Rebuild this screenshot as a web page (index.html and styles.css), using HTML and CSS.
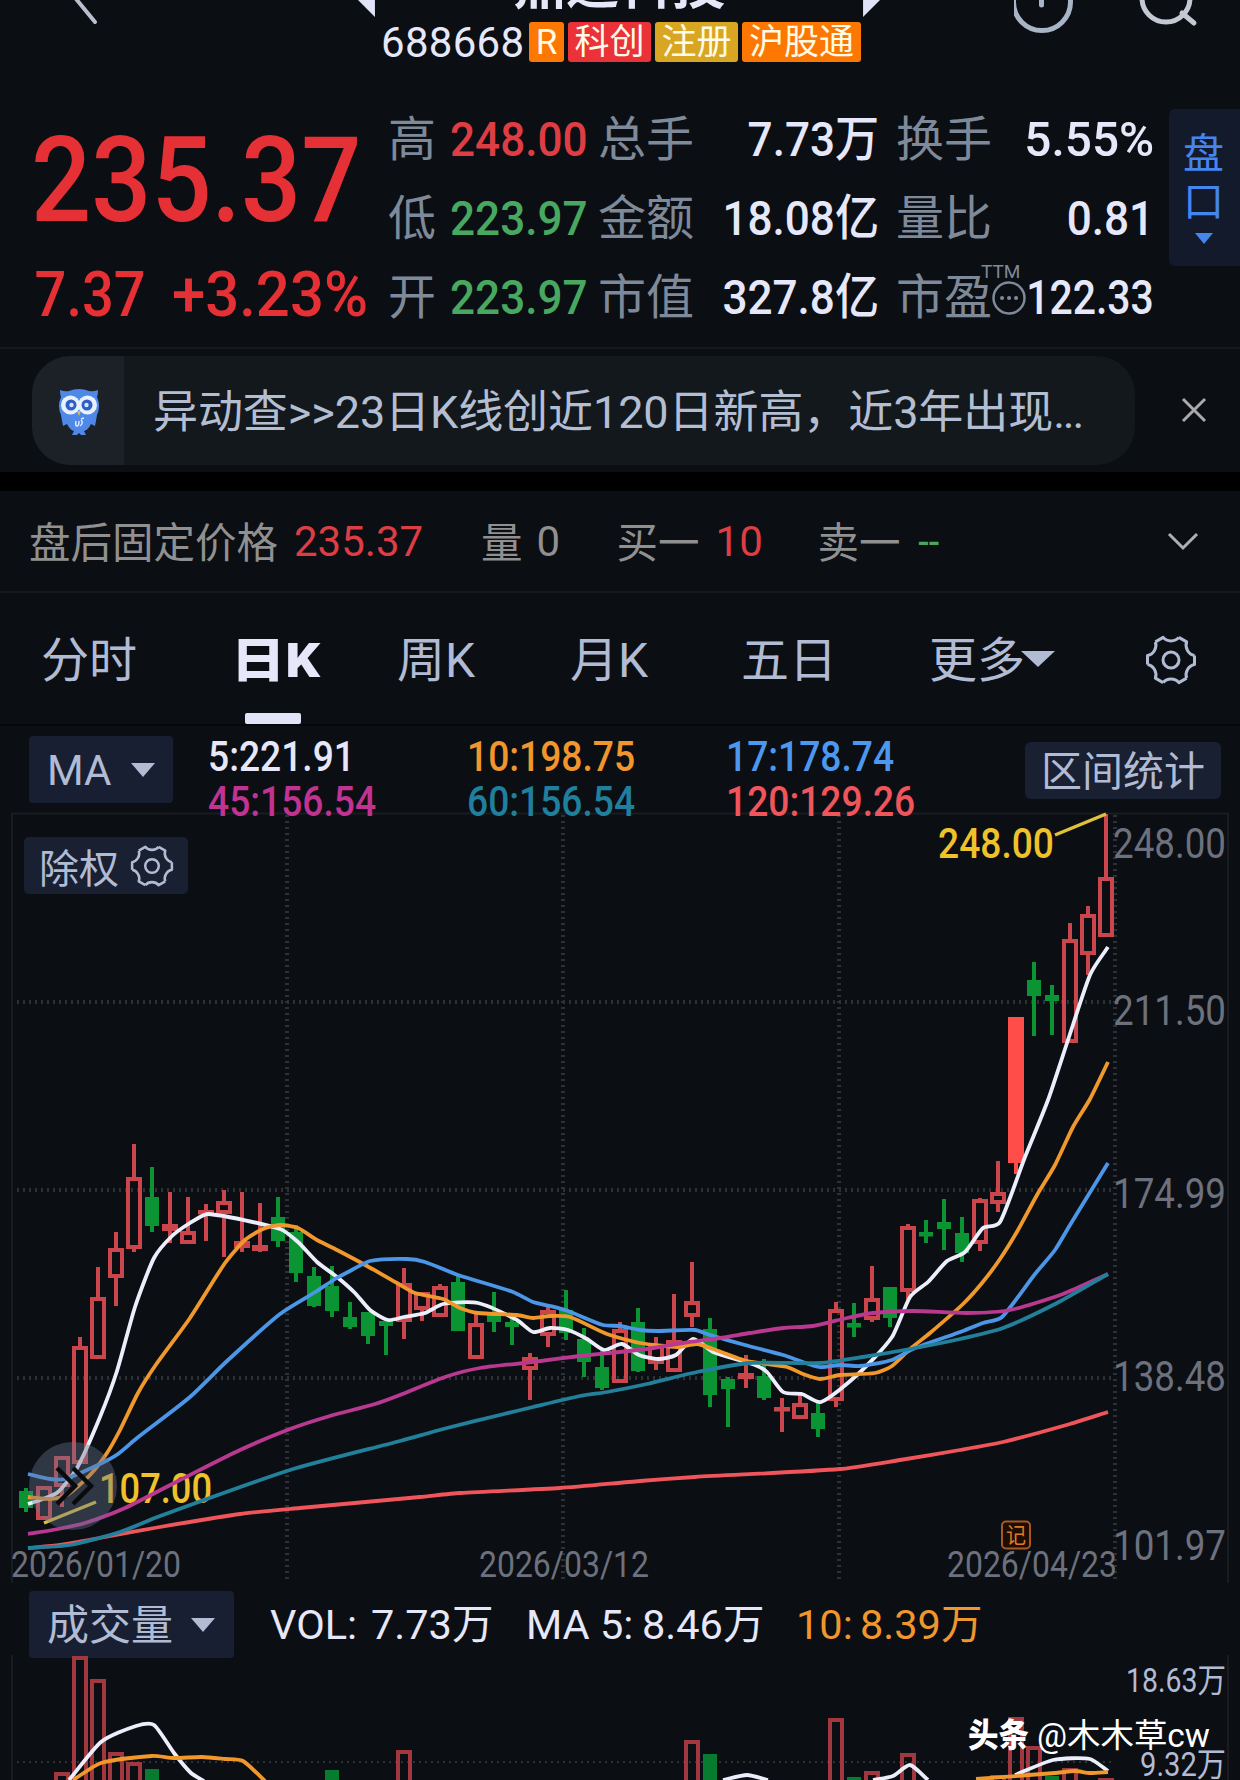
FILE: index.html
```html
<!DOCTYPE html>
<html lang="zh-CN">
<head>
  <meta charset="UTF-8">
  <title>鼎通科技 688668</title>
  <meta name="viewport" content="width=device-width, initial-scale=1.0" />
  <link rel="stylesheet" href="styles.css">
</head>
<body>

  <!-- shared icons -->
  <svg class="defs" width="0" height="0">
    <defs>
      <path id="tooth" d="M23.5-4.500V4.500C17.500 5.500 13.500 12.400 15.650 18.100" />
      <symbol id="gear" viewBox="-26 -26 52 52">
        <use href="#tooth" />
        <use href="#tooth" transform="rotate(60)" />
        <use href="#tooth" transform="rotate(120)" />
        <use href="#tooth" transform="rotate(180)" />
        <use href="#tooth" transform="rotate(240)" />
        <use href="#tooth" transform="rotate(300)" />
        <circle r="8" />
      </symbol>
    </defs>
  </svg>

  <header class="topbar">
    <svg class="back" width="30" height="30" viewBox="0 0 30 30"><path d="M4-6L27 22" /></svg>
    <div class="stock">
      <div class="stock-name">
        <i class="prev"></i>
        <h1>鼎通科技</h1>
        <i class="next"></i>
      </div>
      <div class="tags">
        <span class="code">688668</span>
        <span class="tag orange">R</span>
        <span class="tag red">科创</span>
        <span class="tag gold">注册</span>
        <span class="tag orange wide">沪股通</span>
      </div>
    </div>
    <svg class="actions" width="190" height="40" viewBox="0 0 190 40">
      <circle cx="28" cy="2" r="28.5" />
      <path d="M27.500-8V5" />
      <circle class="lens" cx="152" cy="-2" r="24" />
      <path class="lens" d="M168 13L180 23" />
    </svg>
  </header>

  <section class="quote">
    <div class="price">
      <div class="last"><b>235.37</b></div>
      <div class="change"><b class="diff">7.37</b><b class="pct">+3.23%</b></div>
    </div>
    <div class="stats">
      <label>高</label><b class="up">248.00</b>
      <label>总手</label><b class="right">7.73万</b>
      <label>换手</label><b class="right turnover">5.55%</b>
      <label>低</label><b class="down">223.97</b>
      <label>金额</label><b class="right">18.08亿</b>
      <label>量比</label><b class="right">0.81</b>
      <label>开</label><b class="down">223.97</b>
      <label>市值</label><b class="right">327.8亿</b>
      <label class="pe">市盈<small>TTM</small>
        <svg width="34" height="34" viewBox="-17 -17 34 34"><circle r="15.500" /><path d="M-7 0h.1M0 0h.1M7 0h.1" /></svg>
      </label><b class="right pe-value">122.33</b>
    </div>
    <div class="depth"><span>盘</span><span>口</span><i></i></div>
  </section>

  <section class="notice">
    <div class="pill">
      <div class="owl">
        <svg width="44" height="48" viewBox="0 0 44 48">
          <path fill="#5088e8" d="M3 2Q8 4 12 3Q22-1 32 3Q36 4 41 2Q41 7 40 9Q44 18 40 27Q39 33 38 38L34 36Q31 42 27 43L29 47H24L22 45L20 47H15L17 43Q13 42 10 36L6 38Q5 33 4 27Q0 18 4 9Q3 7 3 2Z" />
          <circle cx="13.500" cy="17" r="9.500" fill="#e8f1ff" />
          <circle cx="30.500" cy="17" r="9.500" fill="#e8f1ff" />
          <circle cx="14" cy="17" r="5.500" fill="#2f5fc4" />
          <circle cx="30" cy="17" r="5.500" fill="#2f5fc4" />
          <circle cx="14.500" cy="17" r="2.200" fill="#d5e5ff" />
          <circle cx="29.500" cy="17" r="2.200" fill="#d5e5ff" />
          <path fill="#d9bd55" d="M20 23h4l-2 5z" />
          <path fill="none" stroke="#dce8ff" stroke-width="1.500" d="M19 33q-1 5 1 5t2-5M23 38q4-3 1-6M24 31l3-1" />
        </svg>
      </div>
      <p>异动查&gt;&gt;23日K线创近120日新高，近3年出现<span>...</span></p>
    </div>
    <svg class="close" width="26" height="26" viewBox="0 0 26 26"><path d="M2 2L24 24M24 2L2 24" /></svg>
  </section>

  <section class="after-hours">
    <span>盘后固定价格</span><em class="up">235.37</em>
    <span class="vol">量</span><em>0</em>
    <span class="buy">买一</span><em class="up">10</em>
    <span class="sell">卖一</span><em class="down">--</em>
    <svg class="chevron" width="34" height="20" viewBox="0 0 34 20"><path d="M3 3L17 17L31 3" /></svg>
  </section>

  <nav class="tabs">
    <a>分时</a>
    <a class="active"><b>日K</b></a>
    <a>周K</a>
    <a>月K</a>
    <a>五日</a>
    <a class="more">更多<i class="caret"></i></a>
    <svg class="gear" width="52" height="52"><use href="#gear" /></svg>
  </nav>

  <section class="ma-bar">
    <div class="select">MA<i class="caret"></i></div>
    <div class="ma-values">
      <span class="ma5">5:221.91</span><span class="ma10">10:198.75</span><span class="ma17">17:178.74</span>
      <span class="ma45">45:156.54</span><span class="ma60">60:156.54</span><span class="ma120">120:129.26</span>
    </div>
    <div class="range">区间统计</div>
  </section>

  <section class="kline">
    <svg width="1240" height="770" viewBox="0 813 1240 770">
      <path class="frame" d="M12 1583V813.500H1228V1583" />
      <path class="grid" d="M17 1002H1115M17 1190H1115M17 1378H1115M287 815V1583M563 815V1583M839 815V1583M1115 815V1583" />
      <g id="candles"></g>
      <g class="axis">
        <text x="1113" y="858" textLength="113">248.00</text>
        <text x="1113" y="1025" textLength="113">211.50</text>
        <text x="1113" y="1208" textLength="113">174.99</text>
        <text x="1113" y="1391" textLength="113">138.48</text>
        <text x="1113" y="1560" textLength="113">101.97</text>
      </g>
      <g class="dates">
        <text x="11" y="1577" textLength="170">2026/01/20</text>
        <text x="479" y="1577" textLength="170">2026/03/12</text>
        <text x="947" y="1577" textLength="170">2026/04/23</text>
      </g>
      <g class="mark">
        <text x="938" y="858" textLength="116">248.00</text>
        <text x="99" y="1503" textLength="113">107.00</text>
        <path d="M1055 835L1106 814M44 1523L96 1502" />
      </g>
      <g id="lines"></g>
      <g class="note">
        <rect x="1002" y="1521.500" width="28" height="27" rx="4" />
        <text x="1006" y="1543" textLength="20">记</text>
      </g>
      <g class="scroll">
        <circle cx="73" cy="1486" r="44" />
        <path d="M57 1468L75 1486L57 1504M73 1468L91 1486L73 1504" />
      </g>
    </svg>
    <div class="adjust">除权<svg class="gear" width="44" height="44"><use href="#gear" /></svg></div>
  </section>

  <section class="vol-bar">
    <div class="select">成交量<i class="caret"></i></div>
    <span class="v1">VOL:</span><span class="v2">7.73万</span>
    <span class="v3">MA 5:</span><span class="v4">8.46万</span>
    <span class="v5">10:</span><span class="v6">8.39万</span>
  </section>

  <section class="volume">
    <svg width="1240" height="122" viewBox="0 1658 1240 122">
      <path class="vframe" d="M12 1655V1780M1228 1655V1780" />
      <path class="vgrid" d="M17 1762H1115" />
      <g id="volumes"></g>
      <g class="vaxis">
        <text x="1126" y="1692" textLength="100">18.63万</text>
        <text x="1140" y="1776" textLength="86">9.32万</text>
      </g>
      <g class="author">
        <text class="brand" x="968" y="1747" textLength="61">头条</text>
        <text x="1037" y="1747" textLength="173">@木木草cw</text>
      </g>
    </svg>
  </section>

  <script src="chart.js"></script>
</body>
</html>
```

FILE: styles.css
```css
* {
  margin: 0;
  padding: 0;
  box-sizing: border-box;
}

body {
  width: 1240px;
  height: 1780px;
  overflow: hidden;
  font-family: Roboto, "Noto Sans CJK SC", sans-serif;
  background: #0b0e13;
  color: #e6e8fa;
}

svg {
  display: block;
  fill: none;
}

.defs {
  position: absolute;
}

i, em {
  font-style: normal;
}

b {
  font-weight: 500;
}

.up {
  color: #dd3d43;
}

.down {
  color: #48a860;
}

/* top bar */
.topbar {
  height: 99px;
  display: flex;
  overflow: hidden;
}

.back {
  margin-left: 68px;
  stroke: #b9bfcc;
  stroke-width: 4;
  stroke-linecap: round;
}

.stock {
  width: 530px;
  margin-left: 256px;
}

.stock-name {
  height: 54px;
  margin-top: -41px;
  display: flex;
  align-items: flex-end;
}

.stock-name h1 {
  width: 489px;
  font-size: 53px;
  line-height: 54px;
  font-weight: 700;
  text-align: center;
}

.prev, .next {
  width: 21px;
  height: 21px;
  margin-bottom: -4px;
  background: #e0e4f6;
  clip-path: polygon(0 0, 100% 0, 100% 100%);
}

.next {
  clip-path: polygon(0 0, 100% 0, 0 100%);
}

.tags {
  display: flex;
  gap: 4px;
  margin: 9px 0 0 27px;
  height: 40px;
  line-height: 40px;
}

.code {
  width: 144px;
  padding-top: 1px;
  font-size: 42px;
  letter-spacing: 0.3px;
}

.tag {
  width: 83px;
  padding-top: 1px;
  border-radius: 3px;
  font-size: 35px;
  text-align: center;
  color: #fffbe6;
}

.tag.orange { background: #fd7803; }
.tag.red { background: #ea3238; }
.tag.gold { background: #d8a622; }
.tag.wide { width: 119px; }

.code + .tag {
  width: 35px;
}

.actions {
  margin-left: 130px;
  stroke: #a9b4c7;
  stroke-width: 5;
  stroke-linecap: round;
}

.actions .lens {
  stroke: #c4c8d2;
}

/* quote */
.quote {
  height: 250px;
  display: flex;
  border-bottom: 2px solid #15191e;
}

.price {
  width: 388px;
  padding: 3px 0 0 31px;
  color: #e53035;
}

.price b {
  display: inline-block;
  transform-origin: left;
}

.last {
  height: 158px;
  font-size: 119px;
  line-height: 158px;
}

.last b {
  transform: scaleX(0.89);
}

.change {
  height: 70px;
  display: flex;
  font-size: 63px;
  line-height: 70px;
}

.diff {
  width: 141px;
  padding-left: 4px;
  transform: scaleX(0.89);
}

.pct {
  transform: scaleX(0.95);
}

.stats {
  width: 781px;
  padding-top: 1px;
  display: grid;
  grid-template-columns: 62px 148px 101px 180px 127px 148px;
  grid-template-rows: repeat(3, 79px);
  line-height: 80px;
}

.stats label {
  font-size: 48px;
  white-space: nowrap;
  color: #7e8999;
}

.stats label:nth-of-type(3n) {
  padding-left: 17px;
}

.stats b {
  font-size: 49px;
  transform: scaleX(0.9);
  transform-origin: left;
}

.stats .right {
  justify-self: end;
  transform-origin: right;
}

.stats .turnover {
  transform: scaleX(0.975);
}

.stats .pe-value {
  transform: scaleX(0.835);
}

.pe {
  position: relative;
}

.pe small {
  position: absolute;
  left: 102px;
  top: 4px;
  font-size: 19px;
  line-height: 20px;
}

.pe svg {
  position: absolute;
  left: 113px;
  top: 23px;
  stroke: #7e8999;
  stroke-width: 2.5;
}

.pe path {
  stroke-width: 4;
  stroke-linecap: round;
}

.depth {
  width: 71px;
  height: 157px;
  margin-top: 10px;
  padding-top: 21px;
  display: flex;
  flex-direction: column;
  align-items: center;
  border-radius: 6px 0 0 6px;
  background: #131a2b;
  font-size: 41px;
  line-height: 48px;
  color: #4585ee;
}

.depth span {
  padding-right: 2px;
}

.depth i {
  margin: 7px 2px 0 0;
  border: 9px solid transparent;
  border-top: 11px solid #4585ee;
  border-bottom: 0;
}

/* notice */
.notice {
  height: 142px;
  padding: 7px 0 0 32px;
  display: flex;
  border-bottom: 19px solid #000;
}

.pill {
  width: 1103px;
  height: 109px;
  display: flex;
  overflow: hidden;
  border-radius: 38px;
  background: #13181c;
}

.owl {
  width: 92px;
  padding: 32px 0 0 25px;
  background: #1c2027;
}

.pill p {
  padding-left: 29px;
  font-size: 45px;
  line-height: 114px;
  letter-spacing: -0.08px;
  white-space: nowrap;
  color: #b3bed3;
}

.pill p span {
  letter-spacing: -2.2px;
}

.close {
  margin: 41px 0 0 46px;
  stroke: #aaa;
  stroke-width: 3;
}

/* after hours */
.after-hours {
  height: 102px;
  padding-left: 29px;
  display: flex;
  align-items: center;
  border-bottom: 2px solid #15191e;
  font-size: 41.5px;
  color: #909090;
}

.after-hours span {
  margin-top: -2px;
}

.after-hours em {
  width: 132px;
  margin-left: 16px;
  font-size: 42px;
}

.after-hours .vol { margin-left: 55px; }
.vol + em { width: 24px; }
.after-hours .vol + em { width: 24px; margin-left: 14px; }
.after-hours .buy { margin-left: 56px; }
.after-hours .buy + em { width: 48px; }
.after-hours .sell { margin-left: 54px; }
.after-hours .sell + em { width: 24px; transform: scaleX(0.9); }

.chevron {
  margin: 0 0 0 225px;
  stroke: #b0b0b0;
  stroke-width: 3;
}

/* tabs */
.tabs {
  height: 133px;
  padding-left: 41px;
  display: flex;
  border-bottom: 2px solid #050709;
  font-size: 48px;
  line-height: 135px;
  color: #b1bbd3;
}

.tabs a {
  width: 173px;
  white-space: nowrap;
}

.tabs a:first-child { width: 195px; }
.tabs a.active { width: 161px; }
.tabs a:nth-child(4) { width: 171px; }
.tabs a:nth-child(5) { width: 188px; }

.tabs .active {
  position: relative;
  color: #e6e8fa;
}

.active b {
  display: inline-block;
  margin-left: -5px;
  font-weight: 900;
  transform: scaleX(1.13);
  transform-origin: left;
}

.active::after {
  content: "";
  position: absolute;
  left: 9px;
  bottom: 0;
  width: 56px;
  height: 11px;
  border-radius: 2px;
  background: #e1e4f8;
}

.caret {
  display: inline-block;
  border: 12px solid transparent;
  border-top: 14px solid #b1bbd3;
  border-bottom: 0;
}

.more .caret {
  border-width: 16px 17px 0;
  margin-bottom: 10px;
  margin-left: -4px;
}

.gear {
  stroke: #b1bbd3;
  stroke-width: 3;
  stroke-linejoin: round;
}

.tabs .gear {
  margin: 41px 0 0 43px;
}

/* MA row */
.ma-bar {
  position: relative;
  z-index: 1;
  height: 87px;
  padding: 10px 0 0 29px;
  display: flex;
}

.select {
  width: 144px;
  height: 67px;
  padding: 2px 18px 0;
  display: flex;
  align-items: center;
  justify-content: space-between;
  border-radius: 4px;
  background: #191f32;
  font-size: 42px;
  color: #b1bbd3;
}

.select .caret {
  margin-bottom: 2px;
}

.ma-values {
  width: 852px;
  padding-left: 35px;
  display: grid;
  grid-template-columns: 259px 259px 260px;
  grid-template-rows: 45px 45px;
  line-height: 41px;
  font-size: 43px;
  font-weight: 500;
}

.ma-values span {
  transform: scaleX(0.865);
  transform-origin: left;
}

.ma5 { color: #e6e8fa; }
.ma10 { color: #f0962c; }
.ma17 { color: #4c98ee; }
.ma45 { color: #c13391; }
.ma60 { color: #207f9d; }
.ma120 { color: #ef555b; }

.range {
  width: 196px;
  height: 57px;
  margin-top: 6px;
  border-radius: 6px;
  background: #182032;
  font-size: 41px;
  line-height: 60px;
  text-align: center;
  color: #b1bbd3;
}

/* daily chart */
.kline {
  position: relative;
  height: 770px;
}

.adjust {
  position: absolute;
  left: 24px;
  top: 24px;
  width: 164px;
  height: 57px;
  padding-left: 15px;
  display: flex;
  align-items: center;
  gap: 11px;
  border-radius: 5px;
  background: #182032;
  font-size: 40px;
  color: #b1bbd3;
}

.kline svg,
.volume svg {
  overflow: visible;
}

.frame, .vframe {
  stroke: #191c21;
  stroke-width: 2;
}

.grid, .vgrid {
  stroke: #2d3034;
  stroke-width: 4;
  stroke-dasharray: 2 4;
}

.vgrid {
  stroke-width: 2;
}

.axis, .dates {
  fill: #6c717d;
  font-size: 43px;
}

.dates {
  font-size: 36px;
}

.mark {
  fill: #efc22c;
  stroke: none;
  font-size: 43px;
  font-weight: 500;
}

.mark path {
  stroke: #dfc23c;
  stroke-width: 3.5;
}

.note {
  font-size: 22px;
  fill: #e07a24;
}

.note rect {
  fill: #1e0d05;
  stroke: #a45a22;
  stroke-width: 2;
}

.scroll circle {
  fill: #68768e;
  fill-opacity: 0.4;
}

.scroll path {
  stroke: #080a0e;
  stroke-width: 4.5;
}

.rise { stroke: #cb464c; stroke-width: 4; }
.fall { stroke: #0b9434; fill: #0b9434; stroke-width: 4; }
.limit { stroke: #ff4e4a; fill: #ff4e4a; stroke-width: 4; }

.line {
  stroke-width: 3.8;
  stroke-linejoin: round;
}

/* volume */
.vol-bar {
  height: 75px;
  padding: 8px 0 0 29px;
  display: flex;
  font-size: 41.5px;
  line-height: 67px;
  white-space: nowrap;
}

.vol-bar .select {
  width: 205px;
  padding-right: 19px;
}

.v1 { width: 101px; margin-left: 36px; }
.v2 { width: 155px; }
.v3 { width: 116px; }
.v4 { width: 154px; }
.v5 { width: 64px; }
.v5, .v6 { color: #f0962c; }

.volume {
  height: 122px;
}

.volume .rise { stroke: #a2383f; }
.volume .fall { fill: #077b30; stroke: none; }

.vaxis {
  fill: #b1bbd3;
  font-size: 33px;
}

.author {
  fill: #fff;
  font-size: 33px;
}

.brand {
  font-weight: 900;
}
```

FILE: chart.js
```js
// [type, high, body top, body bottom, low], one entry per trading day
const days = [
  ['g', 1488, 1491, 1508, 1512], ['r', 1486, 1486, 1520, 1520], ['r', 1456, 1456, 1487, 1507],
  ['r', 1337, 1346, 1464, 1464], ['r', 1267, 1297, 1359, 1359], ['r', 1232, 1248, 1278, 1306],
  ['r', 1144, 1177, 1249, 1252], ['g', 1167, 1197, 1226, 1232], ['r', 1192, 1224, 1231, 1243],
  ['r', 1197, 1231, 1244, 1244], ['r', 1204, 1210, 1214, 1241], ['r', 1190, 1201, 1214, 1257],
  ['r', 1192, 1241, 1248, 1252], ['r', 1203, 1245, 1251, 1252], ['g', 1197, 1217, 1241, 1247],
  ['g', 1225, 1232, 1273, 1282], ['g', 1267, 1276, 1306, 1307], ['g', 1266, 1286, 1311, 1317],
  ['g', 1302, 1317, 1327, 1329], ['g', 1312, 1312, 1336, 1344], ['g', 1320, 1321, 1326, 1355],
  ['r', 1268, 1283, 1322, 1339], ['r', 1292, 1292, 1310, 1321], ['r', 1284, 1286, 1317, 1317],
  ['g', 1275, 1282, 1331, 1331], ['r', 1312, 1323, 1359, 1359], ['g', 1292, 1312, 1322, 1332],
  ['g', 1317, 1322, 1327, 1345], ['r', 1353, 1357, 1370, 1400], ['r', 1307, 1310, 1336, 1347],
  ['g', 1290, 1310, 1333, 1340], ['g', 1328, 1339, 1362, 1377], ['g', 1350, 1367, 1388, 1390],
  ['r', 1322, 1329, 1383, 1383], ['g', 1308, 1322, 1371, 1372], ['r', 1337, 1345, 1364, 1370],
  ['r', 1294, 1340, 1372, 1372], ['r', 1262, 1301, 1317, 1327], ['g', 1318, 1329, 1395, 1407],
  ['g', 1377, 1379, 1389, 1427], ['r', 1355, 1373, 1379, 1388], ['g', 1359, 1376, 1398, 1400],
  ['r', 1398, 1407, 1411, 1432], ['r', 1393, 1403, 1419, 1419], ['g', 1403, 1413, 1429, 1437],
  ['r', 1302, 1309, 1401, 1407], ['g', 1303, 1323, 1327, 1337], ['r', 1266, 1298, 1320, 1322],
  ['g', 1287, 1287, 1318, 1327], ['r', 1224, 1226, 1292, 1300], ['g', 1220, 1232, 1236, 1243],
  ['g', 1199, 1222, 1229, 1250], ['g', 1217, 1233, 1253, 1262], ['r', 1198, 1199, 1244, 1251],
  ['r', 1161, 1192, 1204, 1212], ['f', 1017, 1017, 1163, 1174], ['g', 962, 980, 996, 1036],
  ['g', 985, 995, 1001, 1035], ['r', 923, 939, 1043, 1043], ['r', 906, 914, 955, 975],
  ['r', 814, 877, 937, 937]
];

// moving averages
const lines = {
  '#ef555b': '28,1548 60,1545 105,1537 160,1527 240,1514 300,1508 420,1497 460,1493 560,1488 640,1481 695,1477 840,1469 900,1460 960,1450 1003,1442 1070,1424 1108,1412',
  '#edeefb': '28,1504 43,1499 58,1492 77,1468 100,1417 117,1371 135,1307 154,1258 172,1236 190,1223 208,1214 280,1229 298,1242 317,1262 337,1277 355,1293 370,1310 388,1320 404,1317 425,1313 443,1304 478,1303 517,1320 533,1332 550,1328 568,1330 587,1339 604,1350 622,1344 639,1355 658,1359 676,1355 693,1339 713,1352 755,1365 767,1372 783,1392 802,1394 821,1402 857,1375 892,1337 910,1297 928,1282 947,1261 965,1252 983,1228 1000,1222 1025,1157 1048,1100 1068,1040 1090,975 1108,947',
  '#f0982c': '28,1497 50,1499 67,1495 90,1475 107,1453 120,1430 138,1393 155,1366 190,1318 225,1263 245,1240 263,1229 280,1225 298,1228 317,1240 337,1250 367,1266 397,1283 415,1293 443,1299 460,1308 478,1313 517,1315 533,1318 550,1316 570,1317 607,1334 640,1343 677,1347 697,1344 713,1349 747,1361 787,1367 803,1374 820,1379 840,1375 875,1373 892,1366 910,1349 930,1333 963,1304 982,1283 1000,1259 1018,1230 1037,1195 1055,1165 1073,1127 1090,1099 1108,1062',
  '#4c96e8': '28,1474 50,1479 65,1479 100,1464 118,1454 137,1438 190,1397 227,1361 280,1314 317,1291 335,1279 350,1271 370,1261 407,1259 425,1262 458,1275 513,1292 533,1302 550,1306 568,1311 603,1325 620,1326 640,1330 657,1331 695,1330 710,1335 745,1345 783,1355 819,1367 840,1365 860,1366 892,1360 913,1349 963,1331 983,1323 1002,1317 1035,1274 1055,1250 1070,1225 1108,1163',
  '#b8398f': '28,1534 58,1529 85,1523 125,1508 180,1480 240,1450 290,1429 330,1416 375,1404 400,1395 445,1377 480,1368 533,1362 580,1356 647,1349 683,1343 720,1338 750,1333 783,1328 813,1326 847,1318 873,1313 913,1311 967,1313 1010,1310 1063,1294 1108,1274',
  '#23809a': '28,1548 70,1545 120,1532 160,1516 290,1470 400,1441 447,1428 500,1415 533,1407 580,1396 607,1392 647,1384 697,1372 750,1363 820,1363 863,1357 910,1349 960,1339 1003,1328 1057,1303 1108,1274'
};

// [day index, top, type]
const volumes = [
  [2, 1772, 'r'], [3, 1656, 'r'], [4, 1679, 'r'], [5, 1752, 'r'], [6, 1762, 'r'],
  [7, 1769, 'g'], [17, 1770, 'g'], [21, 1750, 'r'], [37, 1740, 'r'], [38, 1754, 'g'],
  [45, 1718, 'r'], [46, 1777, 'g'], [47, 1771, 'r'], [49, 1753, 'r'], [54, 1775, 'r'],
  [55, 1717, 'r'], [56, 1746, 'r'], [57, 1776, 'g'], [58, 1768, 'r'], [60, 1778, 'r']
];

const volumeLines = [
  ['#edeefb', '69,1780 101,1742 136,1726 154,1725 174,1753 191,1773 204,1781'],
  ['#edeefb', '723,1780 747,1775 768,1780'],
  ['#edeefb', '873,1780 893,1776 910,1765 928,1780'],
  ['#f0982c', '73,1780 101,1763 152,1756 174,1758 202,1757 225,1759 243,1761 265,1781'],
  ['#edeefb', '1015,1775 1053,1760 1090,1759 1108,1771'],
  ['#f0982c', '976,1779 1055,1773 1075,1771 1090,1773 1108,1772']
];

const dayX = i => 26 + i * 18;
const classes = { r: 'rise', g: 'fall', f: 'limit' };

function candle([type, high, top, bottom, low], i) {
  const x = dayX(i);
  const half = type === 'g' ? 5 : 6;
  return `<path class="${classes[type]}" d="M${x} ${high}V${top + 1}M${x} ${bottom - 1}V${low}` +
    `M${x - half} ${top + 2}h${half * 2}V${Math.max(bottom - 2, top + 2.5)}h${-half * 2}z"/>`;
}

// slightly rounded line through all points
function curve(color, points) {
  const p = points.split(' ').map(s => s.split(',').map(Number));
  const k = 0.11;
  let d = `M${p[0]}`;
  for (let i = 0; i < p.length - 1; i++) {
    const a = p[i - 1] || p[i], b = p[i], c = p[i + 1], e = p[i + 2] || c;
    const w = c[0] - b[0];
    const s1 = (c[1] - a[1]) / (c[0] - a[0]), s2 = (e[1] - b[1]) / (e[0] - b[0]);
    d += `C${b[0] + w * k * 2},${b[1] + s1 * w * k * 2} ${c[0] - w * k * 2},${c[1] - s2 * w * k * 2} ${c}`;
  }
  return `<path class="line" stroke="${color}" d="${d}"/>`;
}

document.getElementById('candles').innerHTML = days.map(candle).join('');
document.getElementById('lines').innerHTML =
  Object.entries(lines).map(([color, points]) => curve(color, points)).join('');

document.getElementById('volumes').innerHTML = volumes.map(([i, top, type]) => {
  const x = dayX(i);
  return type === 'g'
    ? `<rect class="fall" x="${x - 7}" y="${top}" width="14" height="${1790 - top}"/>`
    : `<rect class="rise" x="${x - 6}" y="${top + 2}" width="12" height="${1790 - top}"/>`;
}).join('') + volumeLines.map(([color, points]) => curve(color, points)).join('');

document.querySelectorAll('text[textLength]').forEach(t => t.setAttribute('lengthAdjust', 'spacingAndGlyphs'));
```
